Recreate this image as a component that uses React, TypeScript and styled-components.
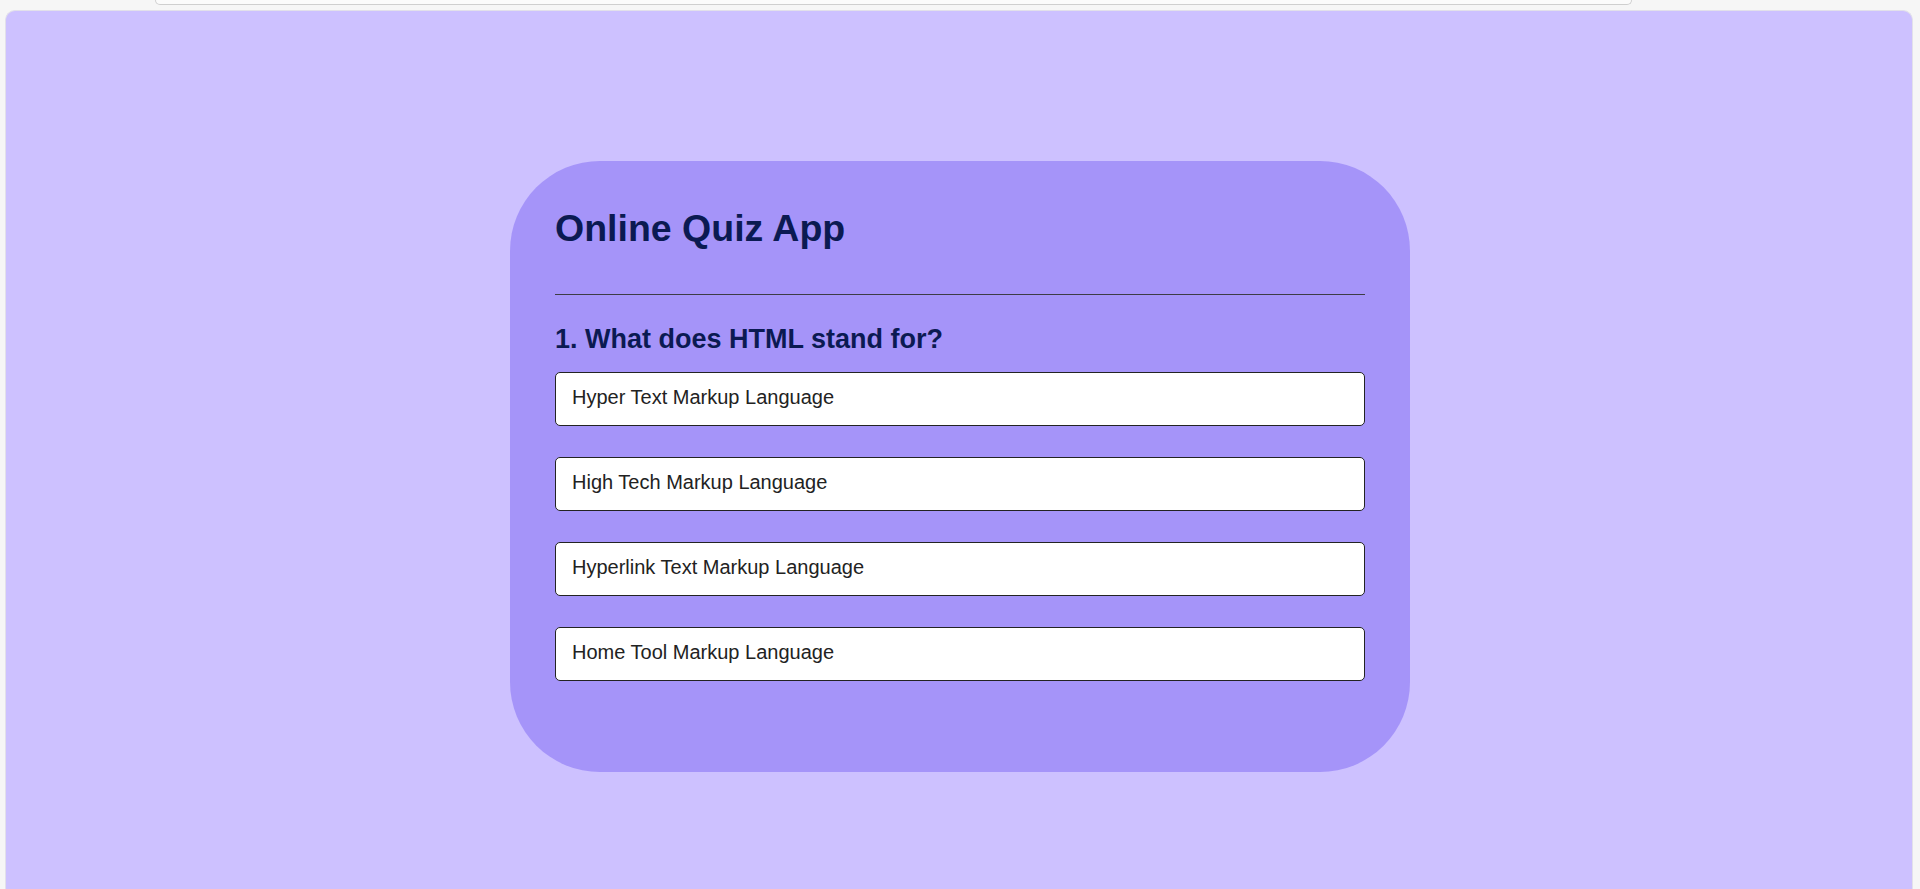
import React from "react";
import styled, { createGlobalStyle } from "styled-components";

const Global = createGlobalStyle`
  html, body {
    margin: 0;
    padding: 0;
    background: #f6f6f6;
    font-family: "Liberation Sans", Arial, sans-serif;
    overflow: hidden;
  }
`;

const Page = styled.div`
  min-height: 889px;
  display: flex;
  flex-direction: column;
`;

const TopBar = styled.div`
  margin: 0 288px 0 155px;
  height: 4px;
  border: 1px solid #cfcfcf;
  border-top: none;
  border-radius: 0 0 14px 14px;
  background: #fbfbfb;
`;

const Panel = styled.main`
  margin: 5px 7px 0 5px;
  flex: 1;
  height: 900px;
  background: #cdc1ff;
  border: 1px solid #e2e0ea;
  border-bottom: none;
  border-radius: 10px 10px 0 0;
  padding: 150px 0 0 2px;
  box-sizing: border-box;
  display: flex;
  justify-content: center;
  align-items: flex-start;
`;

const Card = styled.section`
  width: 900px;
  box-sizing: border-box;
  background: #a594f9;
  border-radius: 90px;
  padding: 46px 45px 91px;
`;

const Title = styled.h1`
  margin: 0;
  font-size: 37.5px;
  font-weight: 700;
  line-height: 42.5px;
  color: #0b1a52;
`;

const Divider = styled.hr`
  margin: 44px 0 0;
  border: none;
  height: 1px;
  background: #3d3d45;
`;

const Question = styled.h2`
  margin: 29px 0 17px;
  font-size: 27px;
  font-weight: 700;
  line-height: 31px;
  color: #0b1a52;
`;

const Options = styled.div`
  display: flex;
  flex-direction: column;
  gap: 31px;
`;

const Option = styled.button`
  display: block;
  width: 100%;
  height: 54px;
  box-sizing: border-box;
  text-align: left;
  background: #ffffff;
  border: 1px solid #232323;
  border-radius: 5px;
  padding: 0 16px 2px;
  font-family: "Liberation Sans", Arial, sans-serif;
  font-size: 20px;
  color: #222222;
  cursor: pointer;
`;

const answers = [
  "Hyper Text Markup Language",
  "High Tech Markup Language",
  "Hyperlink Text Markup Language",
  "Home Tool Markup Language",
];

export default function App() {
  return (
    <>
      <Global />
      <Page>
        <TopBar />
        <Panel>
          <Card>
            <Title>Online Quiz App</Title>
            <Divider />
            <Question>1. What does HTML stand for?</Question>
            <Options>
              {answers.map((a) => (
                <Option key={a}>{a}</Option>
              ))}
            </Options>
          </Card>
        </Panel>
      </Page>
    </>
  );
}
